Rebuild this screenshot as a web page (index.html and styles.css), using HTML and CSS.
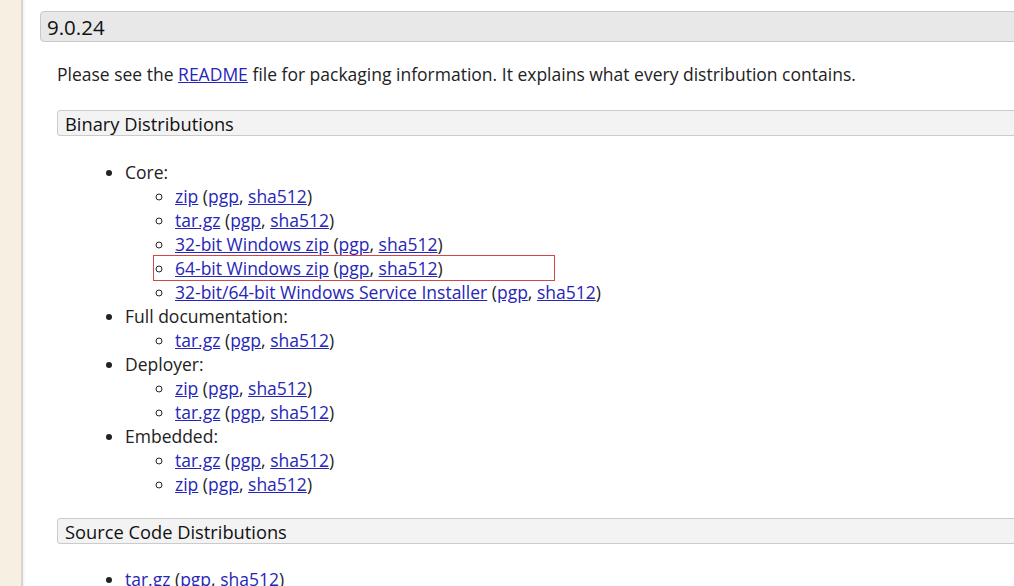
FILE: index.html
```html
<!DOCTYPE html>
<html>
<head>
<meta charset="utf-8">
<link rel="stylesheet" href="styles.css">
</head>
<body>
<div class="page">
  <aside class="side"></aside>
  <main class="content">
    <h3 class="version">9.0.24</h3>
    <div class="section">
      <p class="intro">Please see the <a href="#">README</a> file for packaging information. It explains what every distribution contains.</p>
      <h4 class="subhead">Binary Distributions</h4>
      <ul class="outer">
        <li>Core:
          <ul class="inner">
            <li><a href="#">zip</a> (<a href="#">pgp</a>, <a href="#">sha512</a>)</li>
            <li><a href="#">tar.gz</a> (<a href="#">pgp</a>, <a href="#">sha512</a>)</li>
            <li><a href="#">32-bit Windows zip</a> (<a href="#">pgp</a>, <a href="#">sha512</a>)</li>
            <li class="marked"><span class="mark"></span><a href="#">64-bit Windows zip</a> (<a href="#">pgp</a>, <a href="#">sha512</a>)</li>
            <li><a href="#">32-bit/64-bit Windows Service Installer</a> (<a href="#">pgp</a>, <a href="#">sha512</a>)</li>
          </ul>
        </li>
        <li>Full documentation:
          <ul class="inner">
            <li><a href="#">tar.gz</a> (<a href="#">pgp</a>, <a href="#">sha512</a>)</li>
          </ul>
        </li>
        <li>Deployer:
          <ul class="inner">
            <li><a href="#">zip</a> (<a href="#">pgp</a>, <a href="#">sha512</a>)</li>
            <li><a href="#">tar.gz</a> (<a href="#">pgp</a>, <a href="#">sha512</a>)</li>
          </ul>
        </li>
        <li>Embedded:
          <ul class="inner">
            <li><a href="#">tar.gz</a> (<a href="#">pgp</a>, <a href="#">sha512</a>)</li>
            <li><a href="#">zip</a> (<a href="#">pgp</a>, <a href="#">sha512</a>)</li>
          </ul>
        </li>
      </ul>
      <h4 class="subhead src">Source Code Distributions</h4>
      <ul class="outer last">
        <li><a href="#">tar.gz</a> (<a href="#">pgp</a>, <a href="#">sha512</a>)</li>
      </ul>
    </div>
  </main>
</div>
</body>
</html>
```
FILE: styles.css
```css
html, body {
  margin: 0;
  padding: 0;
  background: #fff;
  overflow: hidden;
  height: 586px;
}
body {
  font-family: "Open Sans", "Liberation Sans", sans-serif;
  font-size: 17.5px;
  color: #222;
}
.page {
  display: flex;
  width: 1100px;
}
.side {
  width: 21px;
  flex: none;
  height: 586px;
  background: #f8efe3;
  border-right: 2px solid #d8d4cf;
  box-shadow: 1px 0 2px rgba(0,0,0,0.08);
}
.content {
  flex: 1;
  padding: 11px 0 0 17px;
}
.version {
  margin: 0;
  height: 29px;
  line-height: 30px;
  padding-left: 6px;
  font-size: 20.5px;
  font-weight: normal;
  color: #111;
  background: #e8e8e8;
  border: 1px solid #c9c9c9;
  border-radius: 4px 0 0 4px;
}
.section {
  padding-left: 17px;
}
.intro {
  margin: 20px 0 0 0;
  line-height: 24px;
}
a {
  color: #2626b8;
  text-decoration: underline;
}
.subhead {
  margin: 24px 0 0 0;
  height: 24px;
  line-height: 25px;
  padding-left: 7px;
  font-size: 18.3px;
  font-weight: normal;
  color: #111;
  background: #f3f3f3;
  border: 1px solid #cbcbcb;
  border-radius: 3px 0 0 3px;
}
.subhead.src {
  margin-top: 22px;
}
.outer {
  margin: 24px 0 0 0;
  padding-left: 68px;
  line-height: 24px;
  list-style: disc;
}
.outer.last {
  margin-top: 23px;
}
.inner {
  margin: 0;
  padding-left: 50px;
  list-style: circle;
}
.marked {
  position: relative;
}
.mark {
  position: absolute;
  left: -22px;
  top: -1px;
  width: 400px;
  height: 24px;
  border: 1px solid #d04848;
  pointer-events: none;
}
```
